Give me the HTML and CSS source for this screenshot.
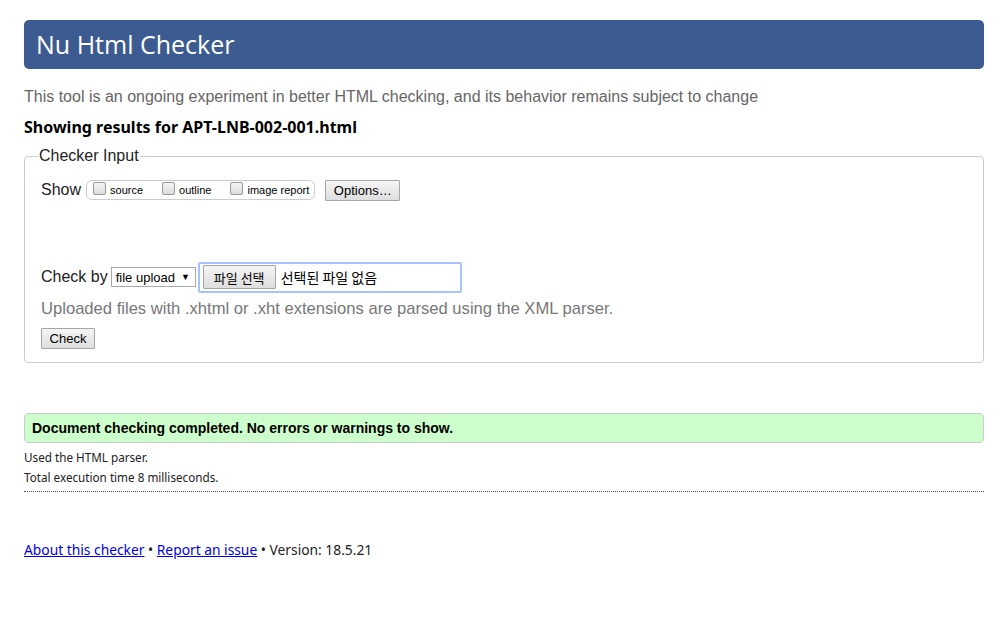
FILE: index.html
```html
<!DOCTYPE html>
<html>
<head>
<meta charset="utf-8">
<title>Nu Html Checker</title>
<link rel="stylesheet" href="styles.css">
</head>
<body>
<div class="page">
  <h1 class="banner">Nu Html Checker</h1>
  <p class="intro">This tool is an ongoing experiment in better HTML checking, and its behavior remains subject to change</p>
  <p class="showing">Showing results for APT-LNB-002-001.html</p>
  <fieldset class="input-box">
    <legend>Checker Input</legend>
    <div class="show-row">
      <span class="label">Show</span>
      <span class="checks">
        <label class="chk"><span class="box"></span>source</label>
        <label class="chk"><span class="box"></span>outline</label>
        <label class="chk"><span class="box"></span>image report</label>
      </span>
      <span class="btn opt">Options…</span>
    </div>
    <div class="by-row">
      <span class="label">Check by</span>
      <span class="select">file upload <span class="arrow">▼</span></span>
      <span class="file">
        <span class="btn filebtn">파일 선택</span>
        <span class="nofile">선택된 파일 없음</span>
      </span>
    </div>
    <p class="hint">Uploaded files with .xhtml or .xht extensions are parsed using the XML parser.</p>
    <span class="btn check">Check</span>
  </fieldset>
  <div class="success">Document checking completed. No errors or warnings to show.</div>
  <div class="details">
    <p>Used the HTML parser.</p>
    <p>Total execution time 8 milliseconds.</p>
  </div>
  <p class="footer"><a href="#">About this checker</a> • <a href="#">Report an issue</a> • Version: 18.5.21</p>
</div>
</body>
</html>
```
FILE: styles.css
```css
html, body { margin: 0; padding: 0; background: #fff; }
body { font-family: "Liberation Sans", Arial, sans-serif; color: #000; }
.page { padding: 20px 19px 0 24px; }
.banner {
  margin: 0;
  background: #3c5b90;
  color: #fff;
  border-radius: 5px;
  height: 49px;
  box-sizing: border-box;
  padding: 8px 12px 0 12px;
  font-family: "Open Sans", "Noto Sans", sans-serif;
  font-weight: 400;
  font-size: 25px;
  line-height: 32px;
}
.intro {
  margin: 19px 0 0 0;
  font-size: 16px;
  line-height: 18px;
  color: #666;
}
.showing {
  margin: 12px 0 0 0;
  font-family: "Noto Sans", "Noto Sans CJK KR", sans-serif;
  font-weight: 700;
  font-size: 16px;
  line-height: 18px;
  color: #000;
}
.input-box {
  margin: 11px 0 0 0;
  border: 1px solid #ccc;
  border-radius: 4px;
  padding: 14px 16px 13px 16px;
  min-width: 0;
}
.input-box legend {
  padding: 0 1px 0 1px;
  margin-left: -3px;
  font-size: 16px;
  line-height: 18px;
  color: #222;
}
.show-row { display: flex; align-items: center; height: 22px; }
.label { font-size: 16px; line-height: 18px; color: #222; }
.checks {
  display: inline-flex;
  align-items: center;
  margin-left: 5px;
  height: 20px;
  box-sizing: border-box;
  border: 1px solid #ccc;
  border-radius: 6px;
  padding: 0 5px 0 6px;
  gap: 19px;
  font-size: 11px;
}
.chk { display: inline-flex; align-items: center; color: #000; }
.box {
  display: inline-block;
  width: 11px; height: 11px;
  border: 1px solid #999;
  border-radius: 2px;
  background: linear-gradient(#f4f4f4, #dcdcdc);
  margin-right: 4px;
  position: relative; top: -2px;
}
.btn {
  display: inline-flex;
  align-items: center;
  justify-content: center;
  box-sizing: border-box;
  border: 1px solid #a6a6a6;
  background: linear-gradient(#f5f5f5, #dedede);
  font-size: 13px;
  color: #000;
  border-radius: 1px;
}
.opt { margin-left: 10px; width: 75px; height: 21px; }
.by-row { display: flex; align-items: center; margin-top: 61px; height: 30px; }
.select {
  margin-left: 3px;
  width: 85px; height: 20px;
  box-sizing: border-box;
  border: 1px solid #a9a9a9;
  font-size: 13px;
  padding-left: 4px;
  display: inline-flex; align-items: center;
  color: #000;
}
.arrow { font-size: 9px; margin-left: 6px; }
.file {
  margin-left: 2px;
  width: 264px; height: 31px;
  box-sizing: border-box;
  border: 2px solid #a5c4ff;
  border-radius: 2px;
  display: inline-flex; align-items: center;
  padding-left: 3px;
  font-family: "Noto Sans CJK KR", sans-serif;
}
.filebtn { width: 73px; height: 24px; font-family: "Noto Sans CJK KR", sans-serif; font-size: 13px; }
.nofile { margin-left: 5px; font-size: 14px; color: #000; }
.hint {
  margin: 7px 0 0 0;
  font-size: 16.6px;
  line-height: 20px;
  color: #777;
}
.check { width: 54px; height: 21px; margin-top: 9px; }
.success {
  margin-top: 50px;
  background: #ccffcc;
  border: 1px solid #ccc;
  border-radius: 4px;
  height: 30px;
  box-sizing: border-box;
  padding: 0 7px;
  display: flex; align-items: center;
  font-weight: 700;
  font-size: 14px;
}
.details {
  padding: 4px 0 4px 0;
  border-bottom: 1px dotted #555;
  font-family: "Noto Sans", "Noto Sans CJK KR", sans-serif;
  font-size: 11.7px;
  color: #222;
}
.details p { margin: 0; line-height: 20px; }
.footer {
  margin: 48px 0 0 0;
  font-family: "Noto Sans", "Noto Sans CJK KR", sans-serif;
  font-size: 13.8px;
  color: #222;
}
.footer a { color: #0000ee; }
```
